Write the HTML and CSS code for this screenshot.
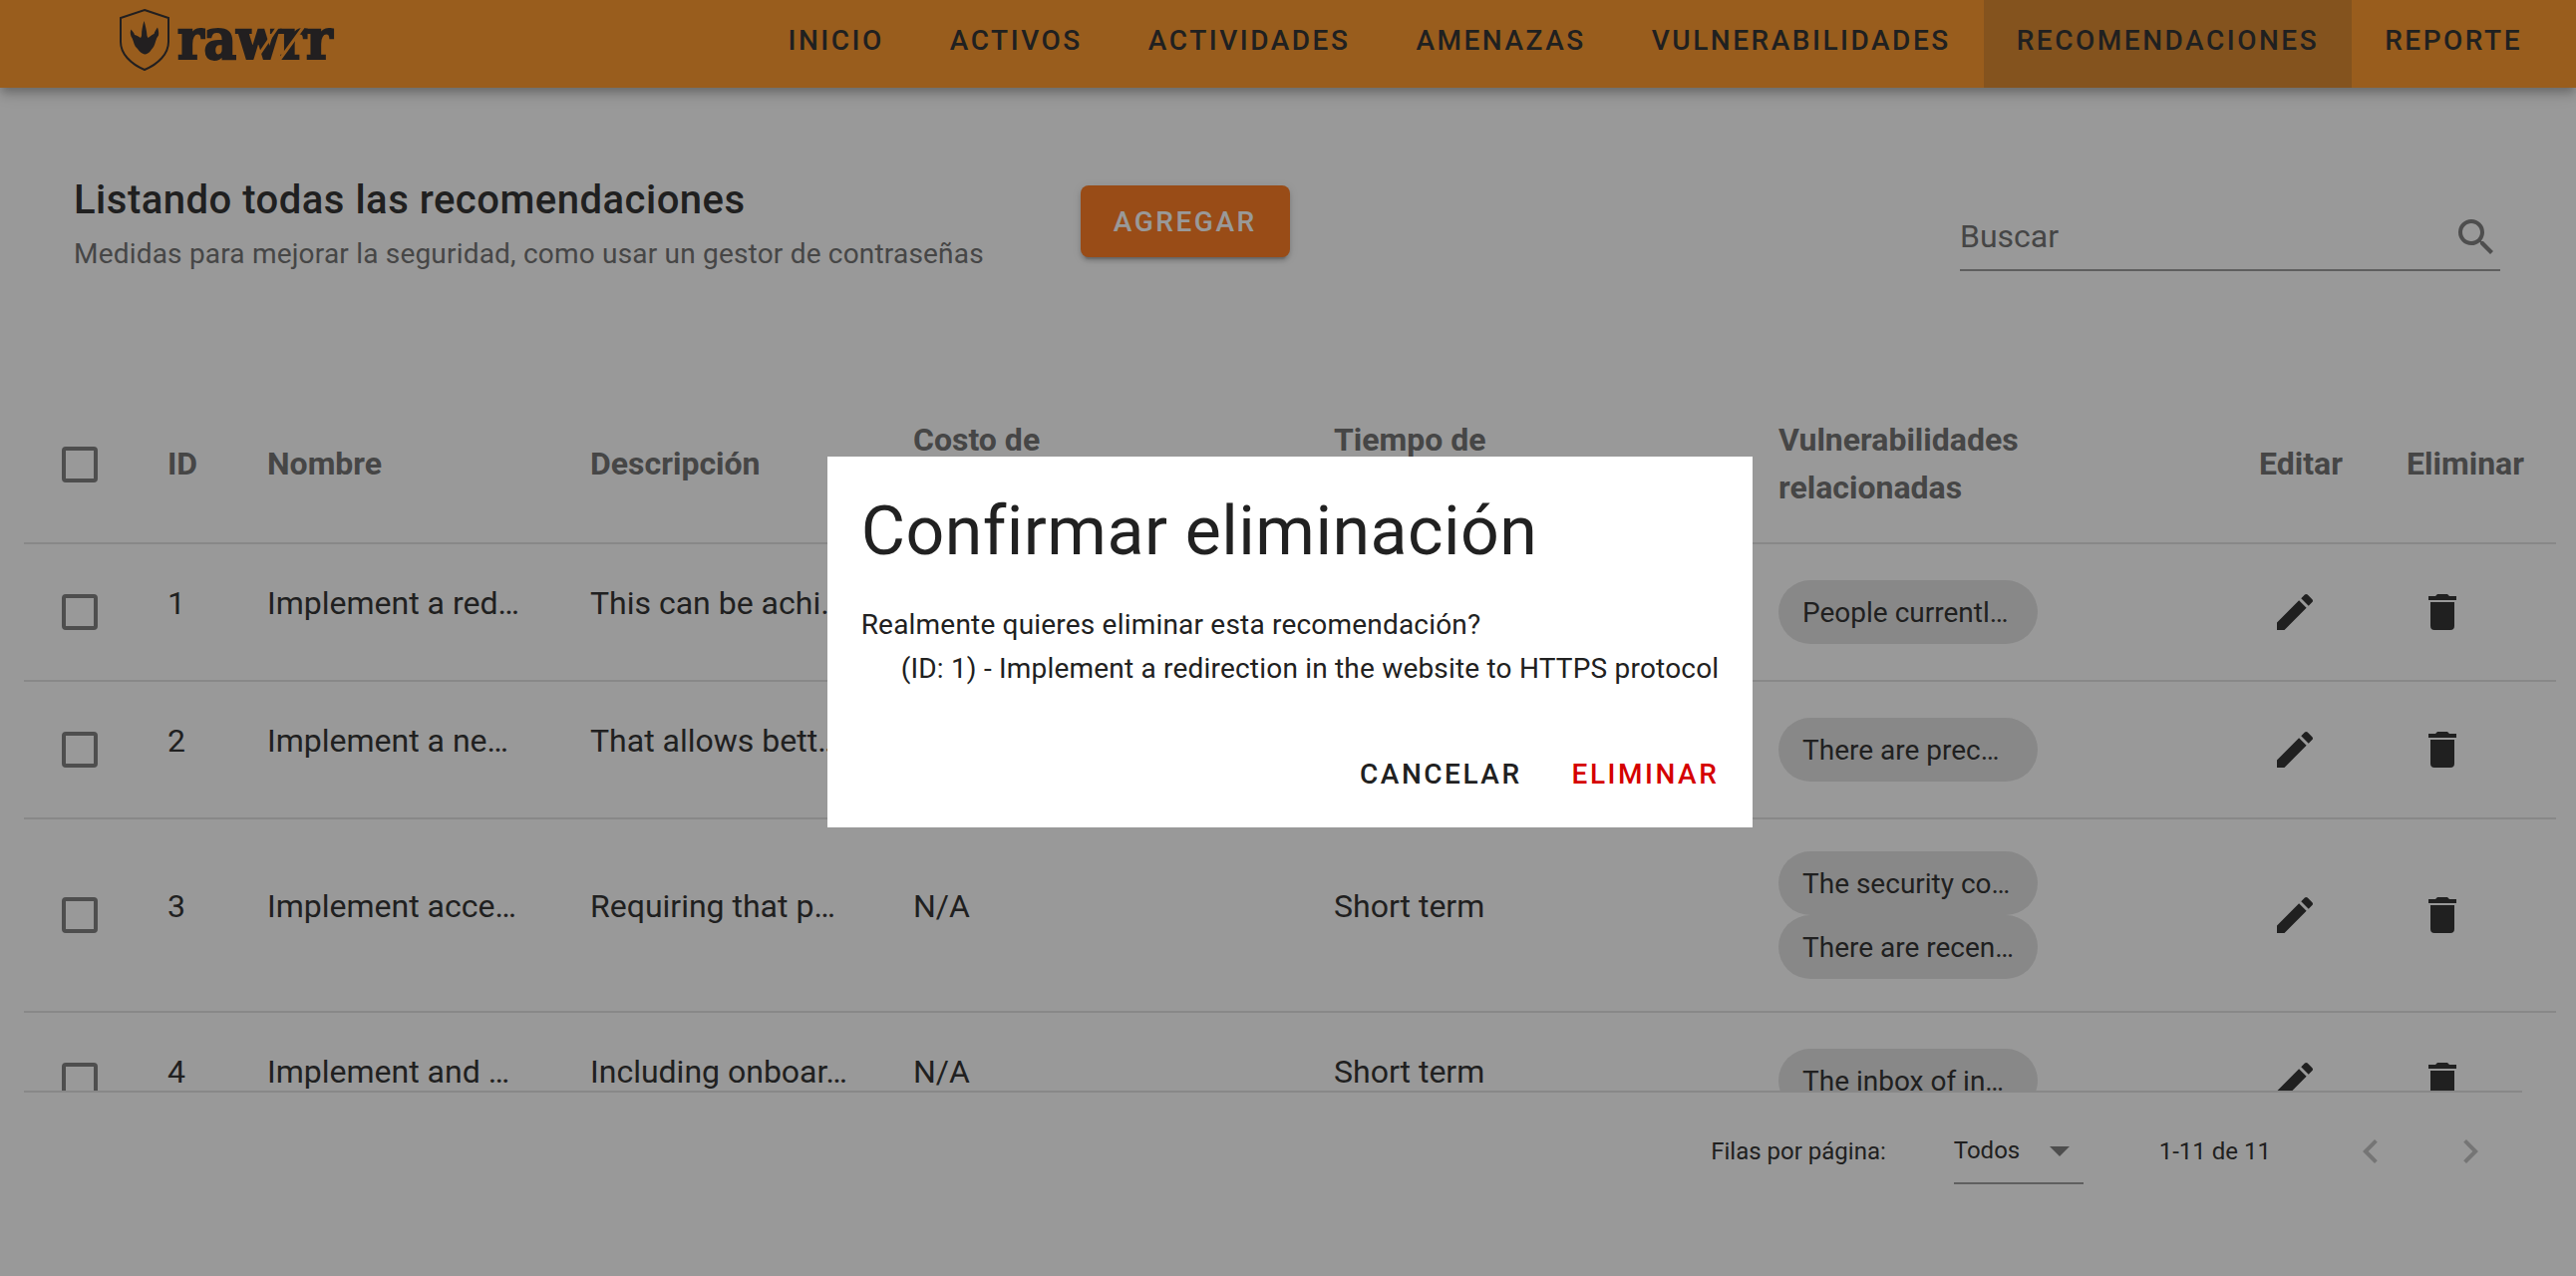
FILE: index.html
```html
<!DOCTYPE html>
<html lang="es">
<head>
<meta charset="utf-8">
<title>Rawrr - Recomendaciones</title>
<link rel="stylesheet" href="styles.css">
</head>
<body>
<svg class="sprite" aria-hidden="true">
  <symbol id="i-pencil" viewBox="0 0 24 24"><path d="M20.71,7.04C21.1,6.65 21.1,6 20.71,5.63L18.37,3.29C18,2.9 17.35,2.9 16.96,3.29L15.12,5.12L18.87,8.87M3,17.25V21H6.75L17.81,9.93L14.06,6.18L3,17.25Z"/></symbol>
  <symbol id="i-delete" viewBox="0 0 24 24"><path d="M19,4H15.5L14.5,3H9.5L8.5,4H5V6H19M6,19A2,2 0 0,0 8,21H16A2,2 0 0,0 18,19V7H6V19Z"/></symbol>
</svg>

<header class="topbar">
  <a class="brand" href="#" aria-label="rawrr">
    <svg class="brand-shield" viewBox="0 0 50 64" aria-hidden="true">
      <path d="M25 2 L49 10 V34 C49 46 39 56 25 62 C11 56 1 46 1 34 V10 Z" fill="none" stroke="currentColor" stroke-width="2"/>
      <path d="M24.500 13 C26 18 27 22 27.500 28 L28.500 30 C31 28 32 27 34.500 26 C35 24 37 21 38 19.500 C39 22 39.500 25 39 27.500 C36 31 36 36 34 39 C31.500 42 30 46 25 46.500 C20 45 18.500 41 16 39 C14 36 13.500 31 11.500 28.500 C10.500 26 10.500 23 11.500 21.500 C12.500 23 14.500 24.500 15 27 C17.500 27.500 19 28.500 21 30 L22 28 C22 22 23 18 24.500 13 Z" fill="currentColor"/>
    </svg>
    <span class="brand-name">rawrr
      <svg class="brand-cuts" viewBox="0 0 154 40" aria-hidden="true">
        <path d="M77 40 L104 0 M101 40 L130 0" fill="none" stroke="#ff911a" stroke-width="3"/>
      </svg>
    </span>
  </a>
  <nav class="tabs">
    <a class="tab" href="#">INICIO</a>
    <a class="tab" href="#">ACTIVOS</a>
    <a class="tab" href="#">ACTIVIDADES</a>
    <a class="tab" href="#">AMENAZAS</a>
    <a class="tab" href="#">VULNERABILIDADES</a>
    <a class="tab tab-active" href="#" aria-current="page">RECOMENDACIONES</a>
    <a class="tab" href="#">REPORTE</a>
  </nav>
</header>

<main class="page">
  <section class="toolbar">
    <div>
      <h1 class="title">Listando todas las recomendaciones</h1>
      <p class="subtitle">Medidas para mejorar la seguridad, como usar un gestor de contraseñas</p>
    </div>
    <button class="btn-add" type="button">AGREGAR</button>
    <div class="search">
      <input class="search-input" type="text" placeholder="Buscar" aria-label="Buscar">
      <svg class="icon icon-muted" viewBox="0 0 24 24" aria-hidden="true"><path d="M9.5,3A6.5,6.5 0 0,1 16,9.5C16,11.11 15.41,12.59 14.44,13.73L14.71,14H15.5L20.5,19L19,20.5L14,15.5V14.71L13.73,14.44C12.59,15.41 11.11,16 9.5,16A6.5,6.5 0 0,1 3,9.5A6.5,6.5 0 0,1 9.5,3M9.5,5C7,5 5,7 5,9.5C5,12 7,14 9.5,14C12,14 14,12 14,9.5C14,7 12,5 9.5,5Z"/></svg>
    </div>
  </section>

  <div class="table-wrap">
    <table class="table">
      <colgroup>
        <col class="c-check"><col class="c-id"><col class="c-text"><col class="c-text"><col class="c-cost"><col class="c-time"><col class="c-vuln"><col class="c-edit"><col class="c-del">
      </colgroup>
      <thead>
        <tr>
          <th class="th-check"><input class="check" type="checkbox" aria-label="Seleccionar todo"></th>
          <th>ID</th>
          <th>Nombre</th>
          <th>Descripción</th>
          <th>Costo de<br>implementación</th>
          <th>Tiempo de<br>implementación</th>
          <th>Vulnerabilidades<br>relacionadas</th>
          <th>Editar</th>
          <th>Eliminar</th>
        </tr>
      </thead>
      <tbody>
        <tr>
          <td><input class="check" type="checkbox" aria-label="Seleccionar 1"></td>
          <td><p class="cell">1</p></td>
          <td><p class="cell">Implement a red…</p></td>
          <td><p class="cell">This can be achi…</p></td>
          <td><p class="cell">N/A</p></td>
          <td><p class="cell">Short term</p></td>
          <td><div class="chips"><span class="chip">People currentl…</span></div></td>
          <td><button class="icon-btn" type="button" aria-label="Editar 1"><svg class="icon"><use href="#i-pencil"/></svg></button></td>
          <td><button class="icon-btn" type="button" aria-label="Eliminar 1"><svg class="icon"><use href="#i-delete"/></svg></button></td>
        </tr>
        <tr>
          <td><input class="check" type="checkbox" aria-label="Seleccionar 2"></td>
          <td><p class="cell">2</p></td>
          <td><p class="cell">Implement a ne…</p></td>
          <td><p class="cell">That allows bett…</p></td>
          <td><p class="cell">N/A</p></td>
          <td><p class="cell">Short term</p></td>
          <td><div class="chips"><span class="chip">There are prec…</span></div></td>
          <td><button class="icon-btn" type="button" aria-label="Editar 2"><svg class="icon"><use href="#i-pencil"/></svg></button></td>
          <td><button class="icon-btn" type="button" aria-label="Eliminar 2"><svg class="icon"><use href="#i-delete"/></svg></button></td>
        </tr>
        <tr>
          <td><input class="check" type="checkbox" aria-label="Seleccionar 3"></td>
          <td><p class="cell">3</p></td>
          <td><p class="cell">Implement acce…</p></td>
          <td><p class="cell">Requiring that p…</p></td>
          <td><p class="cell">N/A</p></td>
          <td><p class="cell">Short term</p></td>
          <td><div class="chips"><span class="chip">The security co…</span><span class="chip">There are recen…</span></div></td>
          <td><button class="icon-btn" type="button" aria-label="Editar 3"><svg class="icon"><use href="#i-pencil"/></svg></button></td>
          <td><button class="icon-btn" type="button" aria-label="Eliminar 3"><svg class="icon"><use href="#i-delete"/></svg></button></td>
        </tr>
        <tr>
          <td><input class="check" type="checkbox" aria-label="Seleccionar 4"></td>
          <td><p class="cell">4</p></td>
          <td><p class="cell">Implement and …</p></td>
          <td><p class="cell">Including onboar…</p></td>
          <td><p class="cell">N/A</p></td>
          <td><p class="cell">Short term</p></td>
          <td><div class="chips"><span class="chip">The inbox of in…</span></div></td>
          <td><button class="icon-btn" type="button" aria-label="Editar 4"><svg class="icon"><use href="#i-pencil"/></svg></button></td>
          <td><button class="icon-btn" type="button" aria-label="Eliminar 4"><svg class="icon"><use href="#i-delete"/></svg></button></td>
        </tr>
      </tbody>
    </table>
  </div>

  <footer class="pager">
    <label for="rows">Filas por página:</label>
    <div class="select">
      <select id="rows"><option>Todos</option></select>
      <svg class="icon icon-muted select-arrow" viewBox="0 0 24 24" aria-hidden="true"><path d="M7,10L12,15L17,10H7Z"/></svg>
    </div>
    <span class="range">1-11 de 11</span>
    <button class="page-btn" type="button" aria-label="Página anterior" disabled><svg class="icon" viewBox="0 0 24 24"><path d="M15.41,16.58L10.83,12L15.41,7.41L14,6L8,12L14,18L15.41,16.58Z"/></svg></button>
    <button class="page-btn" type="button" aria-label="Página siguiente" disabled><svg class="icon" viewBox="0 0 24 24"><path d="M8.59,16.58L13.17,12L8.59,7.41L10,6L16,12L10,18L8.59,16.58Z"/></svg></button>
  </footer>
</main>

<div class="overlay">
  <div class="dialog" role="dialog" aria-modal="true" aria-labelledby="dlg-title">
    <h2 class="dialog-title" id="dlg-title">Confirmar eliminación</h2>
    <div class="dialog-text">
      <p>Realmente quieres eliminar esta recomendación?</p>
      <p class="dialog-item">(ID: 1) - Implement a redirection in the website to HTTPS protocol</p>
    </div>
    <div class="dialog-actions">
      <button class="btn-text" type="button">CANCELAR</button>
      <button class="btn-text btn-danger" type="button">ELIMINAR</button>
    </div>
  </div>
</div>
</body>
</html>
```
FILE: styles.css
```css
* {
  box-sizing: border-box;
}

body {
  margin: 0;
  height: 100vh;
  display: flex;
  flex-direction: column;
  overflow: hidden;
  background: #fff;
  color: #212121;
  font-family: Roboto, "Liberation Sans", sans-serif;
  font-size: 32px;
  line-height: 48px;
}

h1, h2, p {
  margin: 0;
}

button, input, select {
  font: inherit;
  color: inherit;
  margin: 0;
  padding: 0;
  border: 0;
  background: none;
}

a {
  color: inherit;
  text-decoration: none;
}

.sprite {
  display: none;
}

.icon {
  display: block;
  flex: none;
  width: 48px;
  height: 48px;
  fill: currentColor;
}

.icon-muted {
  color: #757575;
}

/* Top bar */
.topbar {
  display: flex;
  justify-content: space-between;
  flex: none;
  height: 88px;
  padding: 0 21px 0 120px;
  background: #ff911a;
  box-shadow: 0 4px 8px -2px rgba(0, 0, 0, .2), 0 8px 10px rgba(0, 0, 0, .14), 0 2px 20px rgba(0, 0, 0, .12);
}

.brand {
  display: flex;
  align-items: center;
  gap: 8px;
  height: 80px;
  color: #231f20;
}

.brand-shield {
  width: 50px;
  height: 64px;
}

.brand-name {
  position: relative;
  height: 80px;
  font: bold 56px/78px "DejaVu Serif Condensed", "DejaVu Serif", serif;
  -webkit-text-stroke: 2px currentColor;
}

.brand-cuts {
  position: absolute;
  left: 0;
  top: 22px;
  width: 154px;
  height: 40px;
}

.tabs {
  display: flex;
}

.tab {
  padding: 0 33px 6px;
  font-size: 28px;
  font-weight: 500;
  line-height: 82px;
  letter-spacing: .09em;
}

.tab-active {
  background: #d97e1d;
}

/* Heading row */
.page {
  flex: 1;
  min-height: 0;
  display: flex;
  flex-direction: column;
  padding: 80px 20px 0 24px;
}

.toolbar {
  display: flex;
  align-items: center;
  flex: none;
  padding: 0 56px 0 50px;
  margin-bottom: 112px;
}

.title {
  font-size: 40px;
  font-weight: 500;
  line-height: 66px;
  letter-spacing: .0125em;
}

.subtitle {
  font-size: 28px;
  line-height: 42px;
  letter-spacing: .007em;
  color: #666;
}

.btn-add {
  height: 72px;
  margin-left: 97px;
  padding: 2px 33px 0;
  border-radius: 8px;
  background: #ff7110;
  color: #fff;
  font-size: 28px;
  font-weight: 500;
  letter-spacing: .09em;
  box-shadow: 0 6px 2px -4px rgba(0, 0, 0, .2), 0 4px 4px rgba(0, 0, 0, .14), 0 2px 10px rgba(0, 0, 0, .12);
}

.search {
  display: flex;
  align-items: center;
  align-self: flex-end;
  width: 542px;
  height: 66px;
  margin: 0 0 4px auto;
  border-bottom: 2px solid #949494;
}

.search-input {
  flex: 1;
  min-width: 0;
  padding-bottom: 2px;
  outline: 0;
}

.search-input::placeholder {
  color: #666;
  opacity: 1;
}

/* Table */
.table-wrap {
  flex: 1;
  min-height: 0;
  overflow: auto;
  scrollbar-width: none;
}

.table {
  width: 100%;
  table-layout: fixed;
  border-spacing: 0;
}

.c-check { width: 112px; }
.c-id { width: 100px; }
.c-text { width: 324px; }
.c-cost { width: 422px; }
.c-time { width: 446px; }
.c-vuln { width: 482px; }
.c-edit { width: 148px; }
.c-del { width: 182px; }

th, td {
  padding: 32px;
  border-bottom: 2px solid #e0e0e0;
  text-align: left;
  vertical-align: middle;
  white-space: nowrap;
}

th {
  height: 158px;
  padding: 29px 32px 31px;
  color: #666;
  font-weight: 700;
}

.th-check {
  padding: 30px 32px;
}

td {
  height: 138px;
}

.check {
  appearance: none;
  display: block;
  width: 36px;
  height: 36px;
  margin: 0 6px;
  border: 4px solid #757575;
  border-radius: 4px;
}

.cell {
  padding-bottom: 18px;
}

.chips {
  display: flex;
  flex-direction: column;
}

.chip {
  width: 260px;
  height: 64px;
  padding: 0 24px;
  border-radius: 32px;
  background: #e0e0e0;
  font-size: 28px;
  line-height: 66px;
}

.icon-btn {
  display: block;
  padding: 0 12px;
}

/* Pagination */
.pager {
  display: flex;
  align-items: center;
  justify-content: flex-end;
  flex: none;
  height: 120px;
  margin: 0 34px 66px 0;
  padding-right: 16px;
  border-top: 2px solid #e0e0e0;
  font-size: 24px;
}

.select {
  position: relative;
  width: 130px;
  height: 66px;
  margin: 0 76px 0 68px;
  border-bottom: 2px solid #949494;
}

.select select {
  appearance: none;
  width: 100%;
  height: 100%;
  outline: 0;
}

.select-arrow {
  position: absolute;
  right: 0;
  top: 8px;
  pointer-events: none;
}

.range {
  margin-right: 64px;
}

.page-btn {
  padding: 0 12px;
  color: #bdbdbd;
}

.page-btn + .page-btn {
  margin-left: 28px;
}

/* Dialog */
.overlay {
  position: fixed;
  inset: 0;
  display: flex;
  align-items: center;
  justify-content: center;
  padding: 8px 0 0 4px;
  background: rgba(33, 33, 33, .46);
}

.dialog {
  background: #fff;
}

.dialog-title {
  padding: 33px 34px 22px;
  font-size: 68px;
  font-weight: 400;
  line-height: 84px;
  letter-spacing: .007em;
}

.dialog-text {
  padding: 8px 34px 40px;
  font-size: 28px;
  line-height: 44px;
  letter-spacing: .007em;
}

.dialog-item {
  padding-left: 40px;
}

.dialog-actions {
  display: flex;
  justify-content: flex-end;
  gap: 18px;
  padding: 8px 18px 17px;
}

.btn-text {
  height: 72px;
  padding: 0 16px;
  font-size: 28px;
  font-weight: 500;
  letter-spacing: .09em;
}

.btn-danger {
  color: #d50000;
}
```
